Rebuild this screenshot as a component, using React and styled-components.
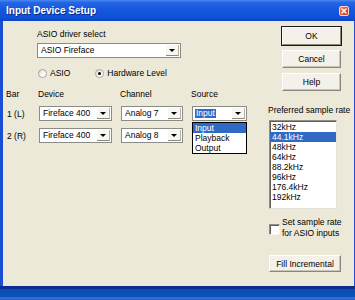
import React from 'react';
import styled, { createGlobalStyle } from 'styled-components';

const GlobalStyle = createGlobalStyle`
  html, body {
    margin: 0;
    padding: 0;
  }
  body {
    width: 355px;
    height: 300px;
    overflow: hidden;
    background: #ECE9D8;
    font-family: "Liberation Sans", Arial, sans-serif;
    font-size: 8.5px;
    color: #000;
  }
`;

const sampleRates = ['32kHz', '44.1kHz', '48kHz', '64kHz', '88.2kHz', '96kHz', '176.4kHz', '192kHz'];
const sources = ['Input', 'Playback', 'Output'];

function Combo({ width, value, focused, children }) {
    return (
        <ComboBox $width={width}>
            <ComboText>
                <ComboValue $focused={focused}>{value}</ComboValue>
            </ComboText>
            <ArrowButton>
                <Triangle />
            </ArrowButton>
            {children}
        </ComboBox>
    );
}

function Radio({ checked, label }) {
    return (
        <RadioItem>
            <RadioCircle>{checked && <RadioDot />}</RadioCircle>
            {label}
        </RadioItem>
    );
}

function App() {
    return (
        <Frame>
            <GlobalStyle />
            <TitleBar>
                <Title>Input Device Setup</Title>
                <CloseButton>
                    <svg width="6" height="6" viewBox="0 0 6 6">
                        <path d="M0.5 0.5 L5.5 5.5 M5.5 0.5 L0.5 5.5" stroke="#fff" strokeWidth="1.4" />
                    </svg>
                </CloseButton>
            </TitleBar>
            <Body>
                <Main>
                    <DriverBlock>
                        <Label>ASIO driver select</Label>
                        <Combo width={144} value="ASIO Fireface" />
                        <RadioRow>
                            <Radio label="ASIO" />
                            <Radio checked label="Hardware Level" />
                        </RadioRow>
                    </DriverBlock>
                    <ChannelGrid>
                        <BarHeader>Bar</BarHeader>
                        <HeaderCell>Device</HeaderCell>
                        <HeaderCell>Channel</HeaderCell>
                        <HeaderCell>Source</HeaderCell>

                        <RowLabel>1 (L)</RowLabel>
                        <Combo value="Fireface 400" />
                        <Combo value="Analog 7" />
                        <Combo value="Input" focused>
                            <DropList>
                                {sources.map((s, i) => (
                                    <DropItem key={s} $selected={i === 0}>
                                        {s}
                                    </DropItem>
                                ))}
                            </DropList>
                        </Combo>

                        <RowLabel>2 (R)</RowLabel>
                        <Combo value="Fireface 400" />
                        <Combo value="Analog 8" />
                        <span />
                    </ChannelGrid>
                </Main>
                <Side>
                    <ButtonStack>
                        <Button $default>OK</Button>
                        <Button>Cancel</Button>
                        <Button>Help</Button>
                    </ButtonStack>
                    <RateLabel>Preferred sample rate</RateLabel>
                    <ListBox>
                        {sampleRates.map((r) => (
                            <ListItem key={r} $selected={r === '44.1kHz'}>
                                {r}
                            </ListItem>
                        ))}
                    </ListBox>
                    <CheckRow>
                        <CheckBox />
                        <CheckText>
                            Set sample rate
                            <br />
                            for ASIO inputs
                        </CheckText>
                    </CheckRow>
                    <FillButton>Fill Incremental</FillButton>
                </Side>
            </Body>
            <BottomFrame />
        </Frame>
    );
}

export default App;

const Frame = styled.div`
    width: 355px;
    height: 300px;
    display: flex;
    flex-direction: column;
    overflow: hidden;
`;

const TitleBar = styled.div`
    height: 21px;
    flex-shrink: 0;
    display: flex;
    align-items: center;
    justify-content: space-between;
    padding: 0 6px 0 6px;
    box-sizing: border-box;
    background: linear-gradient(
        to bottom,
        #4a88f0 0%,
        #2466e4 12%,
        #1657df 45%,
        #0f50d8 85%,
        #0a44c4 100%
    );
`;

const Title = styled.div`
    color: #fff;
    font-weight: bold;
    font-size: 10px;
    text-shadow: 1px 1px 0 #0a2a86;
`;

const CloseButton = styled.div`
    width: 10px;
    height: 10px;
    box-sizing: border-box;
    border: 1px solid #f4d6cc;
    border-radius: 2px;
    background: linear-gradient(135deg, #f08a6a 0%, #e2502c 50%, #c8381a 100%);
    display: flex;
    align-items: center;
    justify-content: center;
`;

const Body = styled.div`
    flex: 1;
    display: flex;
    background: #ECE9D8;
    border-left: 3px solid #1a4fd4;
    border-right: 1px solid #1a4fd4;
`;

const Main = styled.div`
    flex: 1;
    display: flex;
    flex-direction: column;
    padding-top: 8px;
`;

const DriverBlock = styled.div`
    display: flex;
    flex-direction: column;
    padding-left: 34px;
`;

const Label = styled.div`
    line-height: 10px;
    height: 10px;
    margin-bottom: 4px;
`;

const ComboBox = styled.div`
    position: relative;
    width: ${(p) => (p.$width ? `${p.$width}px` : 'auto')};
    height: 15px;
    box-sizing: border-box;
    border: 1px solid #8b8b88;
    background: #fff;
    display: flex;
    align-items: stretch;
`;

const ComboText = styled.div`
    flex: 1;
    display: flex;
    align-items: center;
    padding-left: 2px;
    white-space: nowrap;
    overflow: visible;
`;

const ComboValue = styled.span`
    padding: 0 1px;
    line-height: 9px;
    background: ${(p) => (p.$focused ? '#316AC5' : 'transparent')};
    color: ${(p) => (p.$focused ? '#fff' : '#000')};
`;

const ArrowButton = styled.div`
    width: 13px;
    box-sizing: border-box;
    margin: 1px;
    background: #f7f6f0;
    border-right: 1px solid #b5b2a4;
    border-bottom: 1px solid #8d8a7e;
    display: flex;
    align-items: center;
    justify-content: center;
`;

const Triangle = styled.div`
    width: 0;
    height: 0;
    border-left: 3px solid transparent;
    border-right: 3px solid transparent;
    border-top: 3px solid #000;
`;

const RadioRow = styled.div`
    display: flex;
    gap: 25px;
    margin-top: 9px;
    height: 12px;
    align-items: center;
    padding-left: 1px;
`;

const RadioItem = styled.div`
    display: flex;
    align-items: center;
    gap: 3px;
`;

const RadioCircle = styled.div`
    width: 9px;
    height: 9px;
    box-sizing: border-box;
    border-radius: 50%;
    border: 1px solid #a6a59c;
    background: linear-gradient(135deg, #dcdad0 0%, #fff 70%);
    display: flex;
    align-items: center;
    justify-content: center;
`;

const RadioDot = styled.div`
    width: 3px;
    height: 3px;
    border-radius: 50%;
    background: #000;
`;

const ChannelGrid = styled.div`
    display: grid;
    grid-template-columns: 27px 73px 62px 55px;
    grid-template-rows: 10px 15px 15px;
    column-gap: 9px;
    row-gap: 7px;
    margin-top: 10px;
    align-items: center;
`;

const BarHeader = styled.div`
    line-height: 10px;
    padding-left: 3px;
`;

const HeaderCell = styled.div`
    line-height: 10px;
    margin-left: -1px;
`;

const RowLabel = styled.div`
    padding-left: 4px;
    line-height: 10px;
    white-space: nowrap;
`;

const DropList = styled.div`
    position: absolute;
    top: 15px;
    left: -1px;
    width: 55px;
    box-sizing: border-box;
    border: 1px solid #000;
    background: #fff;
    z-index: 2;
`;

const DropItem = styled.div`
    height: 10px;
    line-height: 10px;
    padding-left: 2px;
    background: ${(p) => (p.$selected ? '#316AC5' : 'transparent')};
    color: ${(p) => (p.$selected ? '#fff' : '#000')};
`;

const Side = styled.div`
    width: 73px;
    padding-right: 13px;
    padding-top: 6px;
    display: flex;
    flex-direction: column;
`;

const ButtonStack = styled.div`
    display: flex;
    flex-direction: column;
    align-items: flex-end;
    gap: 5px;
`;

const Button = styled.div`
    width: 59px;
    height: 18px;
    box-sizing: border-box;
    display: flex;
    align-items: center;
    justify-content: center;
    background: #f3f1ea;
    border-top: 1px solid #fff;
    border-left: 1px solid #fff;
    border-right: 1px solid #8a887c;
    border-bottom: 1px solid #8a887c;
    box-shadow: ${(p) => (p.$default ? '0 0 0 1px #1b1b1b' : 'inset -1px -1px 0 #c9c6b8')};
`;

const RateLabel = styled.div`
    margin-top: 14px;
    line-height: 10px;
    white-space: nowrap;
`;

const ListBox = styled.div`
    margin-top: 5px;
    margin-left: 1px;
    width: 68px;
    height: 89px;
    box-sizing: border-box;
    background: #fff;
    border-top: 1px solid #8f8e88;
    border-left: 1px solid #8f8e88;
    border-right: 1px solid #e4e2d8;
    border-bottom: 1px solid #e4e2d8;
    box-shadow: inset 1px 1px 0 #5e5d58;
    padding-top: 1px;
`;

const ListItem = styled.div`
    height: 10px;
    line-height: 10px;
    padding-left: 2px;
    background: ${(p) => (p.$selected ? '#316AC5' : 'transparent')};
    color: ${(p) => (p.$selected ? '#fff' : '#000')};
`;

const CheckRow = styled.div`
    display: flex;
    align-items: center;
    gap: 2px;
    margin-top: 8px;
    margin-left: 1px;
`;

const CheckBox = styled.div`
    width: 11px;
    height: 11px;
    flex-shrink: 0;
    box-sizing: border-box;
    background: #fff;
    border-top: 1px solid #8f8e88;
    border-left: 1px solid #8f8e88;
    border-right: 1px solid #f4f3ee;
    border-bottom: 1px solid #f4f3ee;
    box-shadow: inset 1px 1px 0 #5e5d58;
    margin-top: 3px;
`;

const CheckText = styled.div`
    line-height: 11px;
    white-space: nowrap;
`;

const FillButton = styled(Button)`
    width: 72px;
    height: 17px;
    margin-top: 16px;
    margin-left: 1px;
`;

const BottomFrame = styled.div`
    height: 14px;
    flex-shrink: 0;
    box-sizing: border-box;
    border-top: 3px solid #0c2c92;
    background: linear-gradient(to bottom, #0a4db4 0%, #0c52ba 70%, #3a78d2 80%, #1f5cc0 100%);
`;
